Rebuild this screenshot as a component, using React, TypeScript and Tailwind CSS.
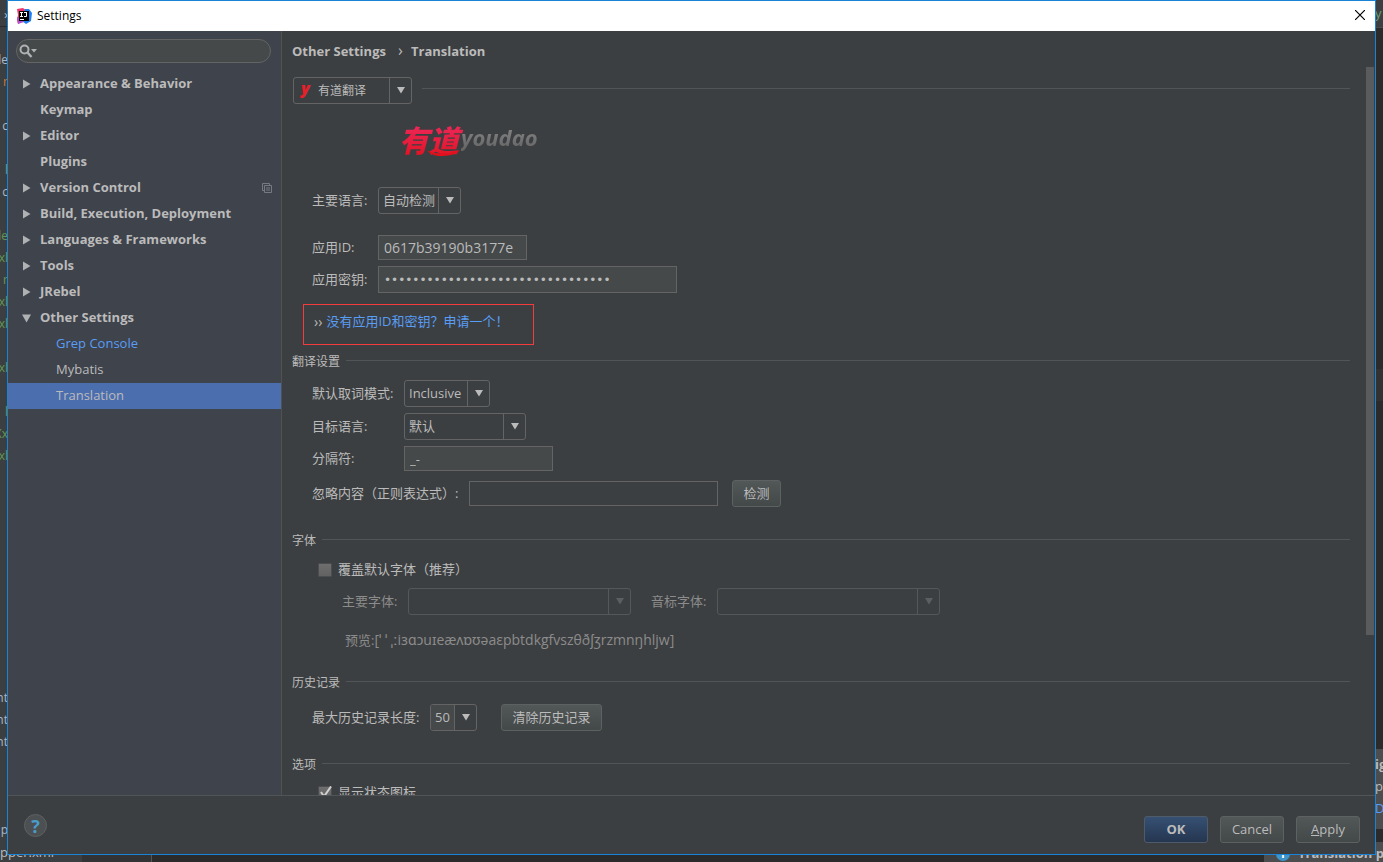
import React from 'react'

type TreeItem = {
  label: string
  state?: 'open' | 'closed'
  child?: boolean
  modified?: boolean
  selected?: boolean
  projectLevel?: boolean
}

const tree: TreeItem[] = [
  { label: 'Appearance & Behavior', state: 'closed' },
  { label: 'Keymap' },
  { label: 'Editor', state: 'closed' },
  { label: 'Plugins' },
  { label: 'Version Control', state: 'closed', projectLevel: true },
  { label: 'Build, Execution, Deployment', state: 'closed' },
  { label: 'Languages & Frameworks', state: 'closed' },
  { label: 'Tools', state: 'closed' },
  { label: 'JRebel', state: 'closed' },
  { label: 'Other Settings', state: 'open' },
  { label: 'Grep Console', child: true, modified: true },
  { label: 'Mybatis', child: true },
  { label: 'Translation', child: true, selected: true },
]

// what sticks out of the editor window on the left of the dialog
const gray = 'text-[#a9b7c6]'
const green = 'text-[#629755]'
const orange = 'text-[#cc7832]'
const codeLines: [string, string][] = [
  ['le', gray], ['r', orange], ['', gray], ['c', gray], ['', gray], ['l', 'text-[#6a9f7a]'], ['c', gray], ['', gray],
  ['le', green], ['xl', green], ['r', green], ['xl', green], ['xl', green], ['', gray], ['xl', green], ['', gray],
  ['l', green], ['Xx', green], ['xl', green], ['', gray], ['', gray], ['', gray], ['', gray], ['', gray],
  ['', gray], ['', gray], ['', gray], ['', gray], ['', gray], ['nt', gray], ['nt', gray], ['nt', gray],
  ['', gray], ['', gray], ['', gray], ['p', gray],
]

function Backdrop() {
  return (
    <div className="absolute inset-0 flex flex-col bg-[#2b2b2b]" aria-hidden="true">
      <div className="flex flex-1 min-h-0 justify-between">
        <div className="w-2 bg-[#3c3f41] overflow-hidden">
          <div className="h-[27px] border-b border-[#2b2b2b] pt-1 pl-1 text-[13px] leading-5 text-[#a9b7c6]">›</div>
          <div className="pt-[22px]">
            {codeLines.map(([text, color], i) => (
              <div key={i} className={`flex h-[22px] justify-end text-xs leading-[22px] ${color}`}>{text}</div>
            ))}
          </div>
        </div>
        <div className="w-2 overflow-hidden text-[13px]">
          <div className="h-7 bg-[#3c3f41] border-b border-[#4a4a4a] pt-1 text-[#6a9f7a]">y</div>
          <div className="h-[341px]" />
          <div className="h-8 bg-[#323232]" />
          <div className="h-[348px]" />
          <div className="h-20 bg-[#4b4d4f] pt-1 leading-[22px] text-[#bbbbbb]">
            <div className="font-bold">ig</div>
            <div>p</div>
            <div className="text-[#589df6]">D</div>
          </div>
        </div>
      </div>
      <div className="flex h-5 justify-between overflow-hidden text-[13px] text-[#bbbbbb]">
        <div className="flex">
          <div className="w-[82px] bg-[#3c3f41] leading-5">pper.xml</div>
          <div className="w-[70px] bg-[#313335] border-r border-[#555555]" />
        </div>
        <div className="flex w-[119px] items-center gap-2 bg-[#4b4d4f] pl-3 pt-1 font-bold whitespace-nowrap">
          <span className="h-3.5 w-3.5 shrink-0 rounded-full bg-[#3d94c9] text-center text-[11px] leading-3.5 text-white">i</span>
          <span>Translation p</span>
        </div>
      </div>
    </div>
  )
}

function Triangle() {
  return (
    <svg width="8" height="7" viewBox="0 0 8 7">
      <path d="M0 0h8L4 6.500z" fill="currentColor" />
    </svg>
  )
}

type ComboProps = {
  id: string
  value: string
  width: string
  disabled?: boolean
  filled?: boolean
  label?: string
  icon?: React.ReactNode
}

function Combo({ id, value, width, disabled, filled, label, icon }: ComboProps) {
  return (
    <div
      className={`flex h-[27px] items-stretch overflow-hidden rounded-[3px] border ${width} ${
        disabled ? 'border-[#555759] text-[#5c5e60]' : 'border-[#646464] text-[#bbbbbb]'
      }`}
    >
      {icon}
      <select
        id={id}
        aria-label={label}
        disabled={disabled}
        defaultValue={value}
        className={`min-w-0 flex-1 appearance-none pl-1 outline-none ${filled ? 'bg-[#45494a]' : 'bg-transparent'}`}
      >
        <option>{value}</option>
      </select>
      <span className={`flex w-[22px] items-center justify-center border-l ${disabled ? 'border-[#555759]' : 'border-[#646464]'}`}>
        <Triangle />
      </span>
    </div>
  )
}

function SectionTitle({ children }: { children: React.ReactNode }) {
  return (
    <div className="flex h-5 items-start gap-1.5 text-xs leading-[22px]">
      <h2>{children}</h2>
      <span className="mt-[9px] h-px flex-1 bg-[#515557]" />
    </div>
  )
}

const button =
  'h-[27px] rounded-[3px] border border-[#5e6162] bg-linear-to-b from-[#525758] to-[#434849] text-center'
const textField = 'border border-[#646464] bg-[#45494a] px-[5px] outline-none'

function Sidebar() {
  return (
    <aside className="w-[274px] shrink-0 border-r border-[#515151] bg-[#3f434c] pt-2">
      <label className="mx-2 flex h-6 w-[255px] items-center rounded-full border border-[#646464] bg-[#45494a] pl-0.5">
        <svg width="20" height="16" viewBox="0 0 20 16" fill="none">
          <circle cx="5.500" cy="6.500" r="4" stroke="#afb1b3" strokeWidth="2" />
          <path d="M8.500 9.500l4 4.500" stroke="#afb1b3" strokeWidth="2.400" />
          <path d="M12 6h6l-3 3.500z" fill="#afb1b3" />
        </svg>
        <input type="text" aria-label="Search settings" className="min-w-0 flex-1 bg-transparent outline-none" />
      </label>
      <ul className="mt-2">
        {tree.map((item) => (
          <li
            key={item.label}
            className={`flex h-[26px] items-center pr-[9px] ${item.selected ? 'bg-[#4b6eaf]' : ''} ${
              item.child ? 'pl-12' : 'pl-3.5 font-bold'
            } ${item.modified ? 'text-[#589df6]' : ''}`}
          >
            {!item.child && (
              <span className="w-[18px] text-[#afb1b3]">
                {item.state === 'closed' && (
                  <svg width="9" height="10" viewBox="0 0 9 10">
                    <path d="M1 .5l7.500 4.500L1 9.500z" fill="currentColor" />
                  </svg>
                )}
                {item.state === 'open' && (
                  <svg width="9" height="9" viewBox="0 0 9 9">
                    <path d="M0 .5h9L4.500 8.500z" fill="currentColor" />
                  </svg>
                )}
              </span>
            )}
            <span className="flex-1">{item.label}</span>
            {item.projectLevel && (
              <svg width="10" height="10" viewBox="0 0 10 10" fill="none" stroke="#777a80">
                <path d="M2.500 7.500h-2v-7h7v2M2.500 2.500h7v7h-7zM4 5h4M4 7h4" />
              </svg>
            )}
          </li>
        ))}
      </ul>
    </aside>
  )
}

function YoudaoLogo() {
  return (
    <div className="ml-[107px] mt-4 flex h-[38px] items-center italic font-black leading-[38px]">
      <span className="relative bg-linear-to-b from-[#f0295e] to-[#e0101c] bg-clip-text pr-1 font-['Noto_Sans_CJK_SC'] text-[30px] text-transparent">
        有道
        <svg className="absolute bottom-0 left-7 overflow-visible" width="32" height="8" viewBox="0 0 32 8">
          <path d="M0 .5C7 4 20 5 33 .5C27 5 20 6 14 6C8 6 3 4 0 .5z" fill="#e0101c" />
        </svg>
      </span>
      <span className="-ml-0.5 -mt-1 bg-linear-to-b from-[#929292] to-[#5c5c5c] bg-clip-text pr-1 text-[22px] font-bold text-transparent">
        youdao
      </span>
    </div>
  )
}

function TranslationPage() {
  return (
    <form className="min-w-0 flex-1 overflow-hidden pt-2.5" onSubmit={(e) => e.preventDefault()}>
      <div className="ml-px flex items-start gap-2.5 text-xs">
        <Combo
          id="engine"
          label="翻译引擎"
          value="有道翻译"
          width="w-[119px]"
          icon={<span className="w-5 pl-[7px] text-base leading-5 font-extrabold italic text-[#e8202a]">y</span>}
        />
        <span className="mt-[11px] h-px flex-1 bg-[#515557]" />
      </div>

      <YoudaoLogo />

      <div className="mt-[29px] pl-5">
        <div className="flex items-center">
          <label htmlFor="primary" className="w-[66px]">主要语言:</label>
          <Combo id="primary" value="自动检测" width="w-[83px]" />
        </div>
        <div className="mt-[21px] flex items-center">
          <label htmlFor="appId" className="w-[66px]">应用ID:</label>
          <input id="appId" type="text" defaultValue="0617b39190b3177e" className={`h-[25px] w-[149px] text-sm ${textField}`} />
        </div>
        <div className="mt-1.5 flex items-center">
          <label htmlFor="appKey" className="w-[66px]">应用密钥:</label>
          <input
            id="appKey"
            type="password"
            defaultValue="5f2c8a1be09d4736a1c8e2f47b9d0e63"
            className={`h-[27px] w-[299px] font-['DejaVu_Sans'] text-xs ${textField}`}
          />
        </div>
      </div>
      <div className="ml-[11px] mt-[11px] flex h-[41px] w-[231px] items-center gap-1 border border-[#f53b3b] pb-1.5 pl-2.5">
        <span className="text-sm leading-4">››</span>
        <a href="#apply" className="text-[#589df6]">没有应用ID和密钥？申请一个！</a>
      </div>

      <section className="mt-1.5">
        <SectionTitle>翻译设置</SectionTitle>
        <div className="mt-[9px] flex flex-col gap-1.5 pl-5">
          <div className="flex items-center">
            <label htmlFor="mode" className="w-[92px]">默认取词模式:</label>
            <Combo id="mode" value="Inclusive" width="w-[86px]" />
          </div>
          <div className="flex items-center">
            <label htmlFor="target" className="w-[92px]">目标语言:</label>
            <Combo id="target" value="默认" width="w-[122px]" />
          </div>
          <div className="flex items-center">
            <label htmlFor="separator" className="w-[92px]">分隔符:</label>
            <input id="separator" type="text" defaultValue="_-" className={`h-[25px] w-[149px] ${textField}`} />
          </div>
        </div>
        <div className="mt-[9px] flex items-center pl-5">
          <label htmlFor="ignore" className="w-[157px]">忽略内容（正则表达式）:</label>
          <input id="ignore" type="text" className="h-[25px] w-[249px] border border-[#646464] bg-transparent px-[5px] outline-none" />
          <button type="button" className={`ml-3.5 w-[49px] ${button}`}>检测</button>
        </div>
      </section>

      <section className="mt-[23px]">
        <SectionTitle>字体</SectionTitle>
        <label className="mt-2.5 ml-[26px] flex h-5 items-center gap-1.5">
          <input
            type="checkbox"
            className="h-3.5 w-3.5 appearance-none rounded-[1px] border border-[#4b4d4f] bg-linear-to-b from-[#6e6e6e] to-[#626262]"
          />
          覆盖默认字体（推荐）
        </label>
        <div className="mt-2 flex items-center pl-[50px] text-[#8c8c8c]">
          <label htmlFor="primaryFont" className="w-[66px]">主要字体:</label>
          <Combo id="primaryFont" value="" width="w-[223px]" disabled />
          <label htmlFor="phoneticFont" className="ml-5 w-[66px]">音标字体:</label>
          <Combo id="phoneticFont" value="" width="w-[223px]" disabled />
        </div>
        <p className="mt-[15px] pl-[53px] text-sm leading-5 text-[#8c8c8c]">
          <span className="text-[13px]">预览:</span>[ˈ ˈ ˌːiɜɑɔuɪeæʌɒʊəaɛpbtdkgfvszθðʃʒrzmnŋhljw]
        </p>
      </section>

      <section className="mt-[22px]">
        <SectionTitle>历史记录</SectionTitle>
        <div className="mt-3 flex items-center pl-5">
          <label htmlFor="history" className="w-[118px]">最大历史记录长度:</label>
          <Combo id="history" value="50" width="w-[47px]" filled />
          <button type="button" className={`ml-6 w-[101px] ${button}`}>清除历史记录</button>
        </div>
      </section>

      <section className="mt-[23px]">
        <SectionTitle>选项</SectionTitle>
        <label className="mt-[9px] ml-[26px] flex h-5 items-center gap-1.5">
          <span className="grid">
            <input
              type="checkbox"
              defaultChecked
              className="col-start-1 row-start-1 h-3.5 w-3.5 appearance-none rounded-[1px] border border-[#4b4d4f] bg-linear-to-b from-[#6e6e6e] to-[#626262]"
            />
            <svg className="pointer-events-none col-start-1 row-start-1" width="14" height="14" viewBox="0 0 14 14" fill="none">
              <path d="M3 6l3 4.500L13 .5" stroke="#d0d0d0" strokeWidth="2" />
            </svg>
          </span>
          显示状态图标
        </label>
      </section>
    </form>
  )
}

export default function App() {
  return (
    <div className="relative flex h-screen flex-col overflow-hidden font-['Open_Sans','Noto_Sans_CJK_SC','Noto_Sans',sans-serif] text-[13px]">
      <Backdrop />
      <div className="relative mx-[7px] mb-[7px] flex min-h-0 flex-1 flex-col border border-[#1883d7] bg-[#3c3f41] text-[#bbbbbb]">
        <header className="flex h-[30px] shrink-0 items-center bg-white pl-2 pr-2.5 text-xs text-black">
          <svg width="16" height="16" viewBox="0 0 16 16">
            <path d="M1 1l6-1 4 3-3 9-6 4-1-4 1-5z" fill="#f0356b" />
            <path d="M9 1l4 0 3 4-1 8-5 3-4-3z" fill="#1d7df2" />
            <path d="M1 9l4 2 3 3-6 2z" fill="#b04fc9" />
            <rect x="3" y="3" width="10" height="10" fill="#000" />
            <path d="M4 4.500h3M5.500 4.500v4M4 8.500h3M8 4.500h3M10.500 4.500v4H8" fill="none" stroke="#fff" />
            <rect x="4" y="11" width="4" height="1" fill="#fff" />
          </svg>
          <h1 className="ml-[5px] flex-1">Settings</h1>
          <button type="button" aria-label="Close" className="pb-0.5">
            <svg width="10" height="10" viewBox="0 0 10 10" stroke="#000" strokeWidth="1.200">
              <path d="M0 0l10 10M10 0l-10 10" />
            </svg>
          </button>
        </header>

        <div className="flex min-h-0 flex-1">
          <Sidebar />
          <main className="flex min-w-0 flex-1 flex-col pl-2.5">
            <nav className="flex h-9 shrink-0 items-start pt-2.5 font-bold leading-5">
              <span>Other Settings</span>
              <span className="w-[25px] pl-1 text-center text-base leading-[18px] font-normal">›</span>
              <span>Translation</span>
            </nav>
            <div className="flex min-h-0 flex-1">
              <TranslationPage />
              <div className="ml-4 w-[9px]">
                <div className="h-[78%] w-2 bg-[#595b5d]" />
              </div>
            </div>
          </main>
        </div>

        <footer className="flex h-[59px] shrink-0 items-start border-t border-[#515557] pr-[15px] pt-[18px]">
          <button
            type="button"
            aria-label="Help"
            className="ml-4 h-[23px] w-[23px] rounded-full border border-[#5e6162] bg-[#4c5052] text-lg leading-5 font-bold text-[#4a9cc9]"
          >
            ?
          </button>
          <div className="ml-auto flex gap-3 pt-0.5">
            <button
              type="submit"
              className="h-[27px] w-16 rounded-[3px] border border-[#4f5b69] bg-linear-to-b from-[#365073] to-[#253650] text-center font-bold"
            >
              OK
            </button>
            <button type="button" className={`w-16 ${button}`}>Cancel</button>
            <button type="button" className={`w-16 ${button}`}><u>A</u>pply</button>
          </div>
        </footer>
      </div>
    </div>
  )
}
